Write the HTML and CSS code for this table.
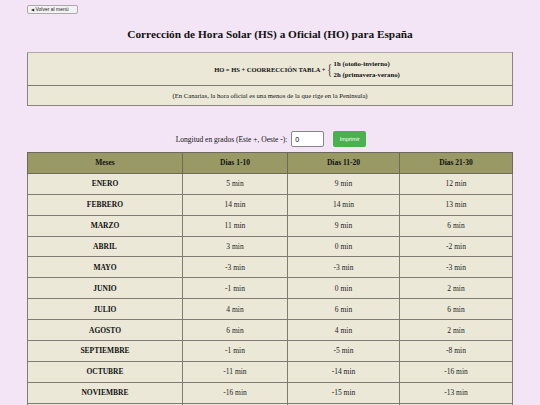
FILE: index.html
```html
<!DOCTYPE html>
<html lang="es">
<head>
<meta charset="utf-8">
<title>Corrección de Hora Solar</title>
<link rel="stylesheet" href="styles.css">
</head>
<body>
<div class="top"><button class="back"><span class="tri">◀</span> Volver al menú</button></div>
<h1 class="title">Corrección de Hora Solar (HS) a Oficial (HO) para España</h1>
<table class="formula">
  <tr><td class="f1"><div class="eqrow"><span class="eq">HO = HS + COORRECCIÓN TABLA +</span><span class="brace">{</span><span class="opts"><span>1h (otoño-invierno)</span><span>2h (primavera-verano)</span></span></div></td></tr>
  <tr><td class="f2">(En Canarias, la hora oficial es una menos de la que rige en la Península)</td></tr>
</table>
<div class="controls">
  <label class="lbl" for="lon">Longitud en grados (Este +, Oeste -):</label>
  <input id="lon" class="inp" type="text" value="0">
  <button class="print">Imprimir</button>
</div>
<table class="data">
  <thead>
    <tr><th class="c1">Meses</th><th class="c2">Dias 1-10</th><th class="c3">Dias 11-20</th><th>Dias 21-30</th></tr>
  </thead>
  <tbody>
    <tr><th>ENERO</th><td>5 min</td><td>9 min</td><td>12 min</td></tr>
    <tr><th>FEBRERO</th><td>14 min</td><td>14 min</td><td>13 min</td></tr>
    <tr><th>MARZO</th><td>11 min</td><td>9 min</td><td>6 min</td></tr>
    <tr><th>ABRIL</th><td>3 min</td><td>0 min</td><td>-2 min</td></tr>
    <tr><th>MAYO</th><td>-3 min</td><td>-3 min</td><td>-3 min</td></tr>
    <tr><th>JUNIO</th><td>-1 min</td><td>0 min</td><td>2 min</td></tr>
    <tr><th>JULIO</th><td>4 min</td><td>6 min</td><td>6 min</td></tr>
    <tr><th>AGOSTO</th><td>6 min</td><td>4 min</td><td>2 min</td></tr>
    <tr><th>SEPTIEMBRE</th><td>-1 min</td><td>-5 min</td><td>-8 min</td></tr>
    <tr><th>OCTUBRE</th><td>-11 min</td><td>-14 min</td><td>-16 min</td></tr>
    <tr><th>NOVIEMBRE</th><td>-16 min</td><td>-15 min</td><td>-13 min</td></tr>
    <tr><th>DICIEMBRE</th><td>-10 min</td><td>-6 min</td><td>-1 min</td></tr>
  </tbody>
</table>
</body>
</html>
```
FILE: styles.css
```css
html, body {
  margin: 0;
  padding: 0;
  background: #f3e5f5;
  font-family: "Liberation Serif", "Times New Roman", serif;
  color: #111;
}
.top {
  padding: 5px 0 0 27px;
  height: 9px;
}
.back {
  display: block;
  box-sizing: border-box;
  width: 51px;
  height: 9px;
  padding: 0 0 0 3px;
  margin: 0;
  font-family: "Liberation Sans", Arial, sans-serif;
  font-size: 5px;
  line-height: 7px;
  text-align: left;
  color: #222;
  background: #f2f2f2;
  border: 1px solid #aaa;
  border-radius: 2px;
  white-space: nowrap;
}
.tri {
  font-family: "DejaVu Sans", sans-serif;
  font-size: 4px;
}
.title {
  margin: 12px 0 0;
  height: 16px;
  font-size: 11.3px;
  line-height: 16px;
  font-weight: bold;
  text-align: center;
}
.formula {
  width: 486px;
  margin: 10px auto 0;
  border-collapse: collapse;
  background: #ebe8d8;
  border: 1px solid #8a8580;
  border-top-color: #aaa;
}
.formula td {
  padding: 0;
  text-align: center;
}
.f1 {
  height: 32px;
  border-bottom: 1px solid #7d7a72;
}
.f2 {
  height: 19px;
  font-size: 6.7px;
}
.eqrow {
  display: flex;
  justify-content: center;
  align-items: center;
  font-weight: bold;
  font-size: 6.5px;
  padding-left: 74px;
}
.brace {
  font-weight: normal;
  font-size: 15px;
  line-height: 15px;
  margin: 0 0 0 1px;
  transform: scaleX(0.6);
}
.opts {
  display: flex;
  flex-direction: column;
  text-align: left;
  line-height: 11px;
  font-size: 6.8px;
}
.controls {
  display: flex;
  justify-content: center;
  align-items: center;
  margin-top: 25px;
  height: 16px;
  gap: 0;
}
.lbl {
  font-size: 7.5px;
  margin-right: 4px;
  padding-left: 2px;
}
.inp {
  box-sizing: border-box;
  width: 33px;
  height: 16px;
  padding: 0 3px;
  margin: 0;
  font-family: "Liberation Sans", Arial, sans-serif;
  font-size: 7px;
  border: 1px solid #888;
  border-radius: 2px;
  background: #fff;
}
.print {
  box-sizing: border-box;
  width: 33px;
  height: 16px;
  margin: 0 0 0 9px;
  padding: 0;
  font-family: "Liberation Sans", Arial, sans-serif;
  font-size: 5.5px;
  color: #fff;
  background: #4caf50;
  border: none;
  border-radius: 2px;
}
.data {
  width: 486px;
  margin: 5px auto 0;
  border-collapse: collapse;
  background: #ebe8d8;
  table-layout: fixed;
}
.data th, .data td {
  border: 1px solid #7f7c74;
  padding: 0;
  text-align: center;
  height: 19.9px;
}
.data thead th {
  background: #999966;
  font-size: 7.5px;
  border-color: #6d6a5c;
}
.data tbody th {
  font-size: 7.5px;
}
.data td {
  font-size: 7.5px;
  color: #222;
}
.c1 { width: 154px; }
.c2 { width: 104px; }
.c3 { width: 111px; }
```
